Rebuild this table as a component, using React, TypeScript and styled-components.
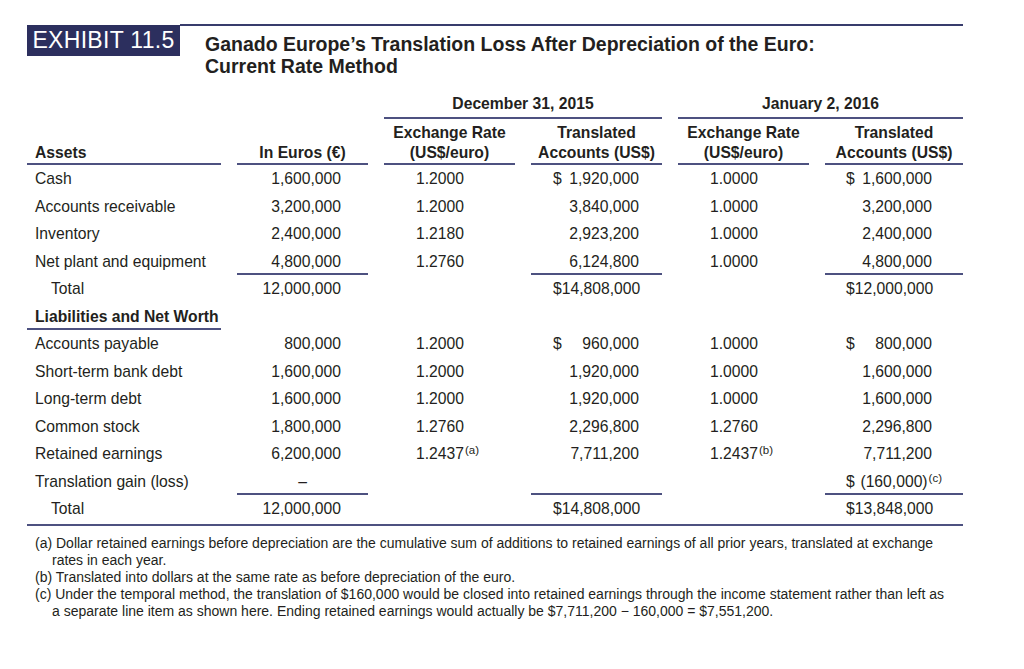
import React from 'react'
import styled, { createGlobalStyle } from 'styled-components'

const RULE = '#4d5180'
const NAVY = '#2c2f5e'

const GlobalStyle = createGlobalStyle`
  html, body {
    margin: 0;
    padding: 0;
    background: #fff;
  }
`

const Page = styled.div`
  width: 1024px;
  min-height: 669px;
  box-sizing: border-box;
  padding: 24px 0 0 27px;
  background: #fff;
  color: #231f20;
  font-family: 'Liberation Sans', Arial, sans-serif;
`

const Header = styled.header`
  display: flex;
  align-items: flex-start;
  width: 936px;
`

const ExhibitBox = styled.div`
  flex: none;
  width: 153px;
  height: 31px;
  margin-top: 1px;
  background: ${NAVY};
  color: #fff;
  font-size: 23px;
  line-height: 31px;
  letter-spacing: 0.3px;
  text-align: center;
`

const TitleBlock = styled.div`
  flex: 1;
  border-top: 2px solid #383c6c;
  padding: 7px 0 0 25px;
`

const Title = styled.h1`
  margin: 0;
  font-size: 19.5px;
  line-height: 22px;
  font-weight: 700;
`

const Table = styled.div`
  display: grid;
  grid-template-columns: 194px repeat(4, 131px) 138px;
  column-gap: 16px;
  width: 936px;
  margin-top: 17px;
  font-size: 15.7px;
`

const GroupSpacer = styled.div`
  grid-column: span 2;
`

const GroupHead = styled.div`
  grid-column: span 2;
  text-align: center;
  font-weight: 700;
  line-height: 20px;
  padding-bottom: 3px;
  border-bottom: 2px solid ${RULE};
`

const ColHead = styled.div<{ $left?: boolean }>`
  display: flex;
  flex-direction: column;
  justify-content: flex-end;
  align-items: ${({ $left }) => ($left ? 'flex-start' : 'center')};
  padding: 4px 0 0 ${({ $left }) => ($left ? '8px' : '0')};
  text-align: center;
  font-weight: 700;
  line-height: 20px;
  border-bottom: 2px solid ${RULE};
`

const Cell = styled.div<{ $rule?: boolean }>`
  height: 27.5px;
  box-sizing: border-box;
  line-height: 27.5px;
  white-space: nowrap;
  border-bottom: 2px solid ${({ $rule }) => ($rule ? RULE : 'transparent')};
`

const LabelCell = styled(Cell)<{ $indent?: boolean; $bold?: boolean }>`
  padding-left: ${({ $indent }) => ($indent ? '24px' : '8px')};
  font-weight: ${({ $bold }) => ($bold ? 700 : 400)};
`

const EuroCell = styled(Cell)<{ $center?: boolean }>`
  text-align: ${({ $center }) => ($center ? 'center' : 'right')};
  padding-right: ${({ $center }) => ($center ? '0' : '27px')};
`

const RateCell = styled(Cell)`
  padding-left: 32px;
`

const MoneyCell = styled(Cell)<{ $jan?: boolean }>`
  display: flex;
  justify-content: space-between;
  padding: ${({ $jan }) => ($jan ? '0 31px 0 21px' : '0 23px 0 22px')};
`

const Amount = styled.span`
  margin-left: auto;
`

const Sup = styled.sup<{ $hang?: boolean }>`
  font-size: 11.5px;
  line-height: 0;
  vertical-align: 5px;
  margin-left: 1px;
  margin-right: ${({ $hang }) => ($hang ? '-10px' : '0')};
`

const FullRule = styled.div`
  grid-column: 1 / -1;
  height: 2px;
  margin-top: 1px;
  background: ${RULE};
`

const Notes = styled.div`
  width: 936px;
  box-sizing: border-box;
  margin-top: 9px;
  padding-left: 8px;
  font-size: 14px;
  line-height: 17px;
`

const Note = styled.p`
  margin: 0;
  padding-left: 17px;
  text-indent: -17px;
`

type Money = { sign?: boolean; value: string; note?: string }

type Row = {
  label: string
  indent?: boolean
  bold?: boolean
  labelRule?: boolean
  rule?: boolean
  eur?: string
  r1?: string
  r1Note?: string
  t1?: Money
  r2?: string
  r2Note?: string
  t2?: Money
}

const rows: Row[] = [
  { label: 'Cash', eur: '1,600,000', r1: '1.2000', t1: { sign: true, value: '1,920,000' }, r2: '1.0000', t2: { sign: true, value: '1,600,000' } },
  { label: 'Accounts receivable', eur: '3,200,000', r1: '1.2000', t1: { value: '3,840,000' }, r2: '1.0000', t2: { value: '3,200,000' } },
  { label: 'Inventory', eur: '2,400,000', r1: '1.2180', t1: { value: '2,923,200' }, r2: '1.0000', t2: { value: '2,400,000' } },
  { label: 'Net plant and equipment', rule: true, eur: '4,800,000', r1: '1.2760', t1: { value: '6,124,800' }, r2: '1.0000', t2: { value: '4,800,000' } },
  { label: 'Total', indent: true, eur: '12,000,000', t1: { value: '$14,808,000' }, t2: { value: '$12,000,000' } },
  { label: 'Liabilities and Net Worth', bold: true, labelRule: true },
  { label: 'Accounts payable', eur: '800,000', r1: '1.2000', t1: { sign: true, value: '960,000' }, r2: '1.0000', t2: { sign: true, value: '800,000' } },
  { label: 'Short-term bank debt', eur: '1,600,000', r1: '1.2000', t1: { value: '1,920,000' }, r2: '1.0000', t2: { value: '1,600,000' } },
  { label: 'Long-term debt', eur: '1,600,000', r1: '1.2000', t1: { value: '1,920,000' }, r2: '1.0000', t2: { value: '1,600,000' } },
  { label: 'Common stock', eur: '1,800,000', r1: '1.2760', t1: { value: '2,296,800' }, r2: '1.2760', t2: { value: '2,296,800' } },
  { label: 'Retained earnings', eur: '6,200,000', r1: '1.2437', r1Note: '(a)', t1: { value: '7,711,200' }, r2: '1.2437', r2Note: '(b)', t2: { value: '7,711,200' } },
  { label: 'Translation gain (loss)', rule: true, eur: '–', t2: { sign: true, value: '(160,000)', note: '(c)' } },
  { label: 'Total', indent: true, eur: '12,000,000', t1: { value: '$14,808,000' }, t2: { value: '$13,848,000' } },
]

const MoneyValue = ({ m }: { m?: Money }) => {
  if (!m) return null
  return (
    <>
      {m.sign && <span>$</span>}
      <Amount>
        {m.value}
        {m.note && <Sup $hang>{m.note}</Sup>}
      </Amount>
    </>
  )
}

export default function App() {
  return (
    <Page>
      <GlobalStyle />
      <Header>
        <ExhibitBox>EXHIBIT 11.5</ExhibitBox>
        <TitleBlock>
          <Title>
            Ganado Europe’s Translation Loss After Depreciation of the Euro:
            <br />
            Current Rate Method
          </Title>
        </TitleBlock>
      </Header>

      <Table>
        <GroupSpacer />
        <GroupHead>December 31, 2015</GroupHead>
        <GroupHead>January 2, 2016</GroupHead>

        <ColHead $left>Assets</ColHead>
        <ColHead>In Euros (€)</ColHead>
        <ColHead>
          <span>Exchange Rate</span>
          <span>(US$/euro)</span>
        </ColHead>
        <ColHead>
          <span>Translated</span>
          <span>Accounts (US$)</span>
        </ColHead>
        <ColHead>
          <span>Exchange Rate</span>
          <span>(US$/euro)</span>
        </ColHead>
        <ColHead>
          <span>Translated</span>
          <span>Accounts (US$)</span>
        </ColHead>

        {rows.map((r, i) => (
          <React.Fragment key={i}>
            <LabelCell $indent={r.indent} $bold={r.bold} $rule={r.labelRule}>
              {r.label}
            </LabelCell>
            <EuroCell $rule={r.rule} $center={r.eur === '–'}>
              {r.eur}
            </EuroCell>
            <RateCell>
              {r.r1}
              {r.r1Note && <Sup>{r.r1Note}</Sup>}
            </RateCell>
            <MoneyCell $rule={r.rule}>
              <MoneyValue m={r.t1} />
            </MoneyCell>
            <RateCell>
              {r.r2}
              {r.r2Note && <Sup>{r.r2Note}</Sup>}
            </RateCell>
            <MoneyCell $jan $rule={r.rule}>
              <MoneyValue m={r.t2} />
            </MoneyCell>
          </React.Fragment>
        ))}
        <FullRule />
      </Table>

      <Notes>
        <Note>
          (a) Dollar retained earnings before depreciation are the cumulative sum of additions to retained earnings of all prior years, translated at exchange
          <br />
          rates in each year.
        </Note>
        <Note>(b) Translated into dollars at the same rate as before depreciation of the euro.</Note>
        <Note>
          (c) Under the temporal method, the translation of $160,000 would be closed into retained earnings through the income statement rather than left as
          <br />
          a separate line item as shown here. Ending retained earnings would actually be $7,711,200 − 160,000 = $7,551,200.
        </Note>
      </Notes>
    </Page>
  )
}
